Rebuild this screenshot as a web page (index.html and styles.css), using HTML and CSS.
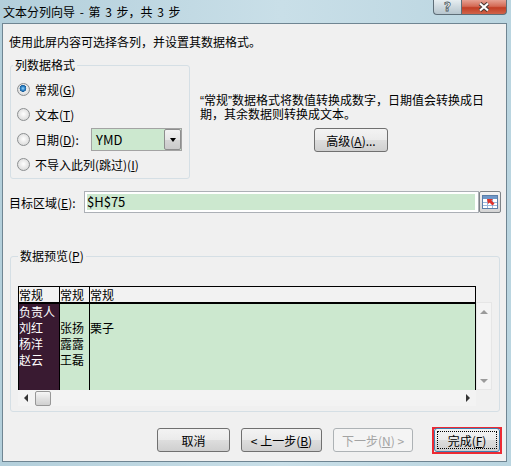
FILE: index.html
```html
<!DOCTYPE html>
<html lang="zh-CN">
<head>
    <meta charset="UTF-8">
    <meta name="viewport" content="width=device-width, initial-scale=1.0">
    <title>文本分列向导 - 第 3 步，共 3 步</title>
    <link rel="stylesheet" href="styles.css">
</head>
<body>
    <div class="window">
        <div class="titlebar">
            <span class="title">文本分列向导 - 第 3 步，共 3 步</span>
            <div class="caption-btns">
                <span class="cap-btn help">?</span>
                <span class="cap-btn close">
                    <svg width="14" height="10" viewBox="0 0 14 10">
                        <path d="M3 1.5 L11 8.5 M11 1.5 L3 8.5" stroke="#4a3a36" stroke-width="4.2"/>
                        <path d="M3 1.5 L11 8.5 M11 1.5 L3 8.5" stroke="#fff" stroke-width="2.2"/>
                    </svg>
                </span>
            </div>
        </div>

        <div class="client">
            <p class="intro">使用此屏内容可选择各列，并设置其数据格式。</p>

            <div class="top">
                <fieldset class="group format">
                    <legend>列数据格式</legend>
                    <div class="radio-row"><span class="radio checked"></span>常规(<u>G</u>)</div>
                    <div class="radio-row"><span class="radio"></span>文本(<u>T</u>)</div>
                    <div class="radio-row">
                        <span class="radio"></span>日期(<u>D</u>):
                        <div class="combo">
                            <span class="combo-val">YMD</span>
                            <span class="combo-btn"><i class="tri-down"></i></span>
                        </div>
                    </div>
                    <div class="radio-row"><span class="radio"></span>不导入此列(跳过)(<u>I</u>)</div>
                </fieldset>

                <div class="hint">
                    <p>“常规”数据格式将数值转换成数字，日期值会转换成日期，其余数据则转换成文本。</p>
                    <div class="btn adv">高级(<u>A</u>)...</div>
                </div>
            </div>

            <div class="target-row">
                <span class="target-label">目标区域(<u>E</u>):</span>
                <div class="range-input"><span class="range-field">$H$75</span></div>
                <span class="range-btn">
                    <svg width="16" height="14" viewBox="0 0 16 14">
                        <rect x="0.5" y="0.5" width="15" height="13" fill="#fff" stroke="#5b7ea8"/>
                        <rect x="1" y="1" width="14" height="3" fill="#6f97c8"/>
                        <path d="M1 7.5H15M1 10.5H15M5.5 4V13M10.5 4V13" stroke="#9ab8dc"/>
                        <path d="M5 4 L11 4 L9.5 5.5 L12.5 8.5 L10.5 10.5 L7.5 7.5 L6 9 Z" fill="#e0322b"/>
                    </svg>
                </span>
            </div>

            <fieldset class="group preview-group">
                <legend>数据预览(<u>P</u>)</legend>
                <div class="preview">
                    <div class="sheet">
                        <div class="grid">
                            <div class="col col1">
                                <div class="hd">常规</div>
                                <div class="cells">
                                    <div>负责人</div>
                                    <div>刘红</div>
                                    <div>杨洋</div>
                                    <div>赵云</div>
                                </div>
                            </div>
                            <div class="col col2">
                                <div class="hd">常规</div>
                                <div class="cells">
                                    <div>&nbsp;</div>
                                    <div>张扬</div>
                                    <div>露露</div>
                                    <div>王磊</div>
                                </div>
                            </div>
                            <div class="col col3">
                                <div class="hd">常规</div>
                                <div class="cells">
                                    <div>&nbsp;</div>
                                    <div>栗子</div>
                                </div>
                            </div>
                        </div>
                        <div class="hscroll">
                            <i class="tri-left"></i>
                            <span class="thumb"></span>
                            <i class="tri-right"></i>
                        </div>
                    </div>
                    <div class="vscroll">
                        <i class="tri-up"></i>
                        <i class="tri-dn"></i>
                    </div>
                </div>
            </fieldset>

            <div class="actions">
                <div class="btn cancel">取消</div>
                <div class="btn back">&lt; 上一步(<u>B</u>)</div>
                <div class="btn next disabled">下一步(<u>N</u>) &gt;</div>
                <div class="mark">
                    <div class="btn finish"><span class="focus">完成(<u>F</u>)</span></div>
                </div>
            </div>
        </div>
    </div>
</body>
</html>
```

FILE: styles.css
```css
*{
    box-sizing: border-box;
}
body{
    margin: 0;
    font-family: "Noto Sans CJK SC", "Microsoft YaHei", sans-serif;
    font-size: 12px;
    color: #000;
}
u{
    text-decoration: underline;
    text-underline-offset: 1px;
}

/* window frame */
.window{
    width: 511px;
    height: 466px;
    display: flex;
    flex-direction: column;
    padding: 0 4px 4px 2px;
    background: linear-gradient(to right, #b3cfdb, #c9dfe8 55%, #bad5e0);
}
.titlebar{
    height: 23px;
    display: flex;
    align-items: flex-start;
}
.title{
    padding-left: 1px;
    line-height: 23px;
    font-size: 12px;
    word-spacing: 2px;
}
.caption-btns{
    margin-left: auto;
    display: flex;
}
.cap-btn{
    height: 15px;
    display: flex;
    align-items: center;
    justify-content: center;
    border: 1px solid #5e6e78;
    border-top: none;
}
.help{
    width: 28px;
    border-radius: 0 0 0 4px;
    border-right: none;
    background: linear-gradient(#e7eef1, #cdd8de 50%, #b7c6ce);
    color: #fff;
    font-family: "DejaVu Sans", sans-serif;
    font-weight: bold;
    font-size: 12px;
    -webkit-text-stroke: 0.8px #4d5a62;
}
.close{
    width: 46px;
    border-radius: 0 0 4px 0;
    background: linear-gradient(#e6a193, #d46a55 45%, #c23e25 55%, #d0644a);
}

/* client area */
.client{
    flex: 1;
    background: #f0f0f0;
    border: 1px solid #6f8592;
    padding: 0 6px 0 7px;
}
.intro{
    margin: 10px 0 0 -1px;
    line-height: 16px;
}
.top{
    display: flex;
    margin-top: 7px;
}
.group{
    margin: 0;
    min-width: 0;
    border: 1px solid #d5dfe5;
    border-radius: 3px;
}
.group legend{
    padding: 0 2px;
    line-height: 16px;
}
.format{
    width: 180px;
    padding: 4px 7px 1px 2px;
}
.radio-row{
    height: 25px;
    display: flex;
    align-items: center;
    margin-left: 4px;
}
.radio{
    width: 13px;
    height: 13px;
    margin-right: 5px;
    border-radius: 50%;
    border: 1px solid #8c8f91;
    background: radial-gradient(circle at 50% 45%, #ffffff 0, #eaeaea 45%, #d2d2d2 100%);
}
.radio.checked{
    background: radial-gradient(circle at 45% 40%, #9ad6f7 0, #2c83c9 2px, #1a5d98 3.2px, transparent 3.6px),
                radial-gradient(circle at 50% 45%, #ffffff 0, #eaeaea 45%, #d2d2d2 100%);
}
.combo{
    margin-left: auto;
    width: 91px;
    height: 23px;
    display: flex;
    align-items: center;
    border: 1px solid #a3a3a3;
    background: #cce8cf;
    padding-left: 4px;
}
.combo-val{
    font-size: 13px;
}
.combo-btn{
    margin-left: auto;
    width: 17px;
    height: 21px;
    display: flex;
    align-items: center;
    justify-content: center;
    border: 1px solid #8e8e8e;
    border-radius: 2px;
    background: linear-gradient(#f3f3f3, #e6e6e6 50%, #d6d6d6 50%, #cacaca);
}
.tri-down{
    border-top: 4px solid #000;
    border-left: 3.5px solid transparent;
    border-right: 3.5px solid transparent;
}

.hint{
    margin-left: 10px;
    padding-top: 37px;
}
.hint p{
    margin: 0;
    width: 290px;
    line-height: 14px;
    /* narrow quote marks, CJK falls through to Noto */
    font-family: "Liberation Sans", "Noto Sans CJK SC", sans-serif;
}
.btn{
    height: 24px;
    display: flex;
    align-items: center;
    justify-content: center;
    border: 1px solid #707070;
    border-radius: 3px;
    background: linear-gradient(#f3f3f3, #ebebeb 48%, #dddddd 52%, #cfcfcf);
}
.adv{
    width: 74px;
    margin: 6px 0 0 114px;
}

/* target range */
.target-row{
    display: flex;
    align-items: center;
    height: 22px;
    margin-top: 12px;
}
.target-label{
    width: 75px;
    margin-left: -1px;
}
.range-input{
    flex: 1;
    height: 22px;
    border: 1px solid #acb0b6;
    background: #fff;
    padding: 2px 3px 2px 2px;
    display: flex;
}
.range-field{
    flex: 1;
    background: #cce8cf;
    font-size: 13px;
    line-height: 16px;
}
.range-btn{
    width: 22px;
    height: 22px;
    margin-right: -1px;
    display: flex;
    align-items: center;
    justify-content: center;
    border: 1px solid #7f8488;
    border-radius: 2px;
    background: linear-gradient(#f4f4f4, #e4e4e4 50%, #d4d4d4);
}

/* preview */
.preview-group{
    margin-top: 35px;
    padding: 22px 7px 5px 7px;
}
.preview{
    display: flex;
}
.sheet{
    width: 458px;
}
.grid{
    height: 104px;
    display: flex;
    border: 1px solid #000;
    border-bottom: none;
    line-height: 16px;
}
.col{
    display: flex;
    flex-direction: column;
}
.col1{
    width: 41px;
    border-right: 1px solid #000;
}
.col2{
    width: 30px;
    border-right: 1px solid #000;
}
.col3{
    flex: 1;
}
.hd{
    height: 17px;
    line-height: 15px;
    border-bottom: 2px solid #000;
    background: #f2f2f2;
}
.cells{
    flex: 1;
    background: #cce8cf;
}
.col1 .cells{
    background: #391a31;
    color: #fff;
}
.hscroll{
    height: 16px;
    display: flex;
    align-items: center;
    padding: 0 6px;
    background: #f3f3f3;
}
.tri-left{
    border-right: 4px solid #333;
    border-top: 4px solid transparent;
    border-bottom: 4px solid transparent;
}
.tri-right{
    margin-left: auto;
    border-left: 4px solid #333;
    border-top: 4px solid transparent;
    border-bottom: 4px solid transparent;
}
.thumb{
    width: 16px;
    height: 15px;
    margin-left: 7px;
    border: 1px solid #979797;
    border-radius: 2px;
    background: linear-gradient(to bottom, #f6f6f6, #e2e2e2 50%, #d0d0d0);
}
.vscroll{
    width: 16px;
    height: 88px;
    margin-top: 16px;
    display: flex;
    flex-direction: column;
    align-items: center;
    justify-content: space-between;
    padding: 7px 0 6px;
    background: #f4f4f4;
    border: 1px solid #e6e6e6;
}
.tri-up{
    border-bottom: 4px solid #9a9a9a;
    border-left: 4px solid transparent;
    border-right: 4px solid transparent;
}
.tri-dn{
    border-top: 4px solid #9a9a9a;
    border-left: 4px solid transparent;
    border-right: 4px solid transparent;
}

/* bottom buttons */
.actions{
    display: flex;
    justify-content: flex-end;
    margin-top: 16px;
}
.cancel{
    width: 73px;
}
.back{
    width: 81px;
    margin-left: 11px;
}
.next{
    width: 80px;
    margin-left: 11px;
}
.btn.disabled{
    color: #a3a3a3;
    border-color: #adb2b5;
    background: #f4f4f4;
}
.mark{
    margin: -1px -2px -2px 19px;
    border: 2px solid #ec2a33;
}
.finish{
    width: 66px;
    margin-top: -1px;
    padding: 2px;
    border-color: #3c7fb1;
}
.focus{
    width: 100%;
    height: 100%;
    display: flex;
    align-items: center;
    justify-content: center;
    border: 1px dotted #000;
}
```
